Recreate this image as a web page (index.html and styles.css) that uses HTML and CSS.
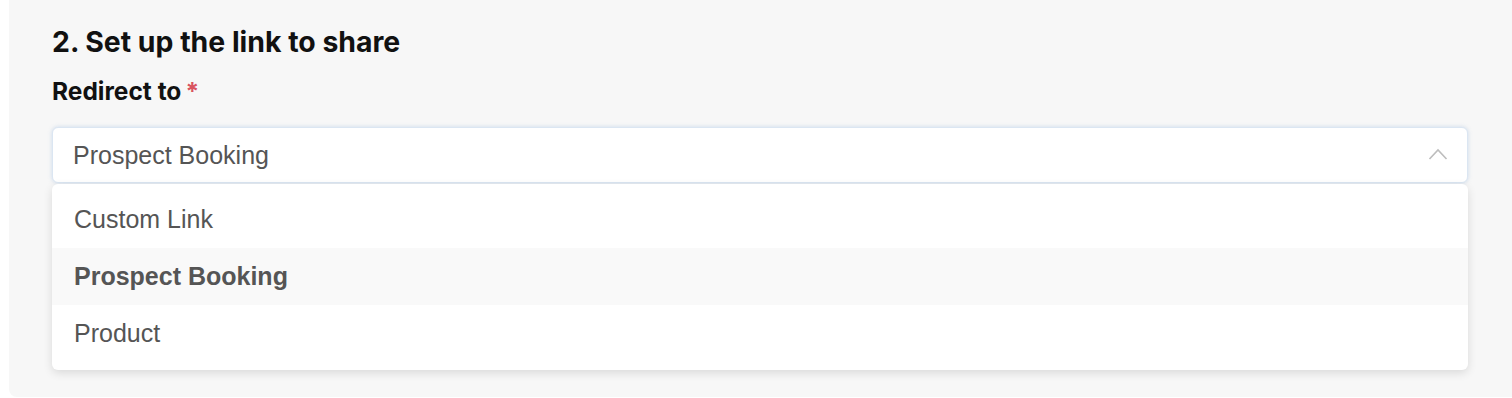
FILE: index.html
```html
<!DOCTYPE html>
<html lang="en">
<head>
<meta charset="utf-8">
<title>Set up the link</title>
<link rel="stylesheet" href="styles.css">
</head>
<body>
<section class="panel">
  <h2 class="title">2. Set up the link to share</h2>
  <label class="label">Redirect to<span class="req">*</span></label>
  <div class="select">
    <span class="value">Prospect Booking</span>
    <svg class="chev" width="20" height="12" viewBox="0 0 20 12"><path d="M1.5 11 L10 2 L18.5 11" fill="none" stroke="#bdbdbd" stroke-width="1.6"/></svg>
  </div>
  <ul class="menu">
    <li class="opt">Custom Link</li>
    <li class="opt active">Prospect Booking</li>
    <li class="opt">Product</li>
  </ul>
</section>
</body>
</html>
```
FILE: styles.css
```css
html, body { margin: 0; padding: 0; background: #ffffff; }
body { width: 1512px; height: 398px; overflow: hidden; }
.panel {
  margin-left: 9px;
  height: 397px;
  box-sizing: border-box;
  background: #f7f7f7;
  border-bottom-left-radius: 8px;
  padding: 25px 44px 0 43px;
  display: flex;
  flex-direction: column;
}
.title {
  margin: 0;
  font-family: Inter, Lato, sans-serif;
  font-weight: 700;
  font-size: 28.4px;
  line-height: 34px;
  color: #111;
}
.label {
  margin-top: 18px;
  font-family: Inter, Lato, sans-serif;
  font-weight: 700;
  font-size: 24.5px;
  line-height: 28px;
  color: #111;
}
.req { color: #d9545f; margin-left: 4px; }
.select {
  margin-top: 22px;
  height: 56px;
  box-sizing: border-box;
  background: #fff;
  border: 1px solid #dbe6f2;
  border-radius: 6px;
  box-shadow: 0 0 4px rgba(120, 160, 210, 0.35);
  display: flex;
  align-items: center;
  justify-content: space-between;
  padding: 0 19px 0 20px;
}
.value {
  font-family: "Liberation Sans", Arial, sans-serif;
  font-size: 25px;
  color: #555;
}
.chev { display: block; margin-top: -2px; }
.menu {
  list-style: none;
  margin: 1px 0 0 0;
  padding: 7px 0 8px 0;
  background: #fff;
  border-radius: 6px;
  box-shadow: 0 3px 10px rgba(0,0,0,0.12);
}
.opt {
  height: 57px;
  display: flex;
  align-items: center;
  padding-left: 22px;
  font-family: "Liberation Sans", Arial, sans-serif;
  font-size: 25px;
  color: #555;
}
.opt.active { background: #f9f9f9; font-weight: 700; }
```
